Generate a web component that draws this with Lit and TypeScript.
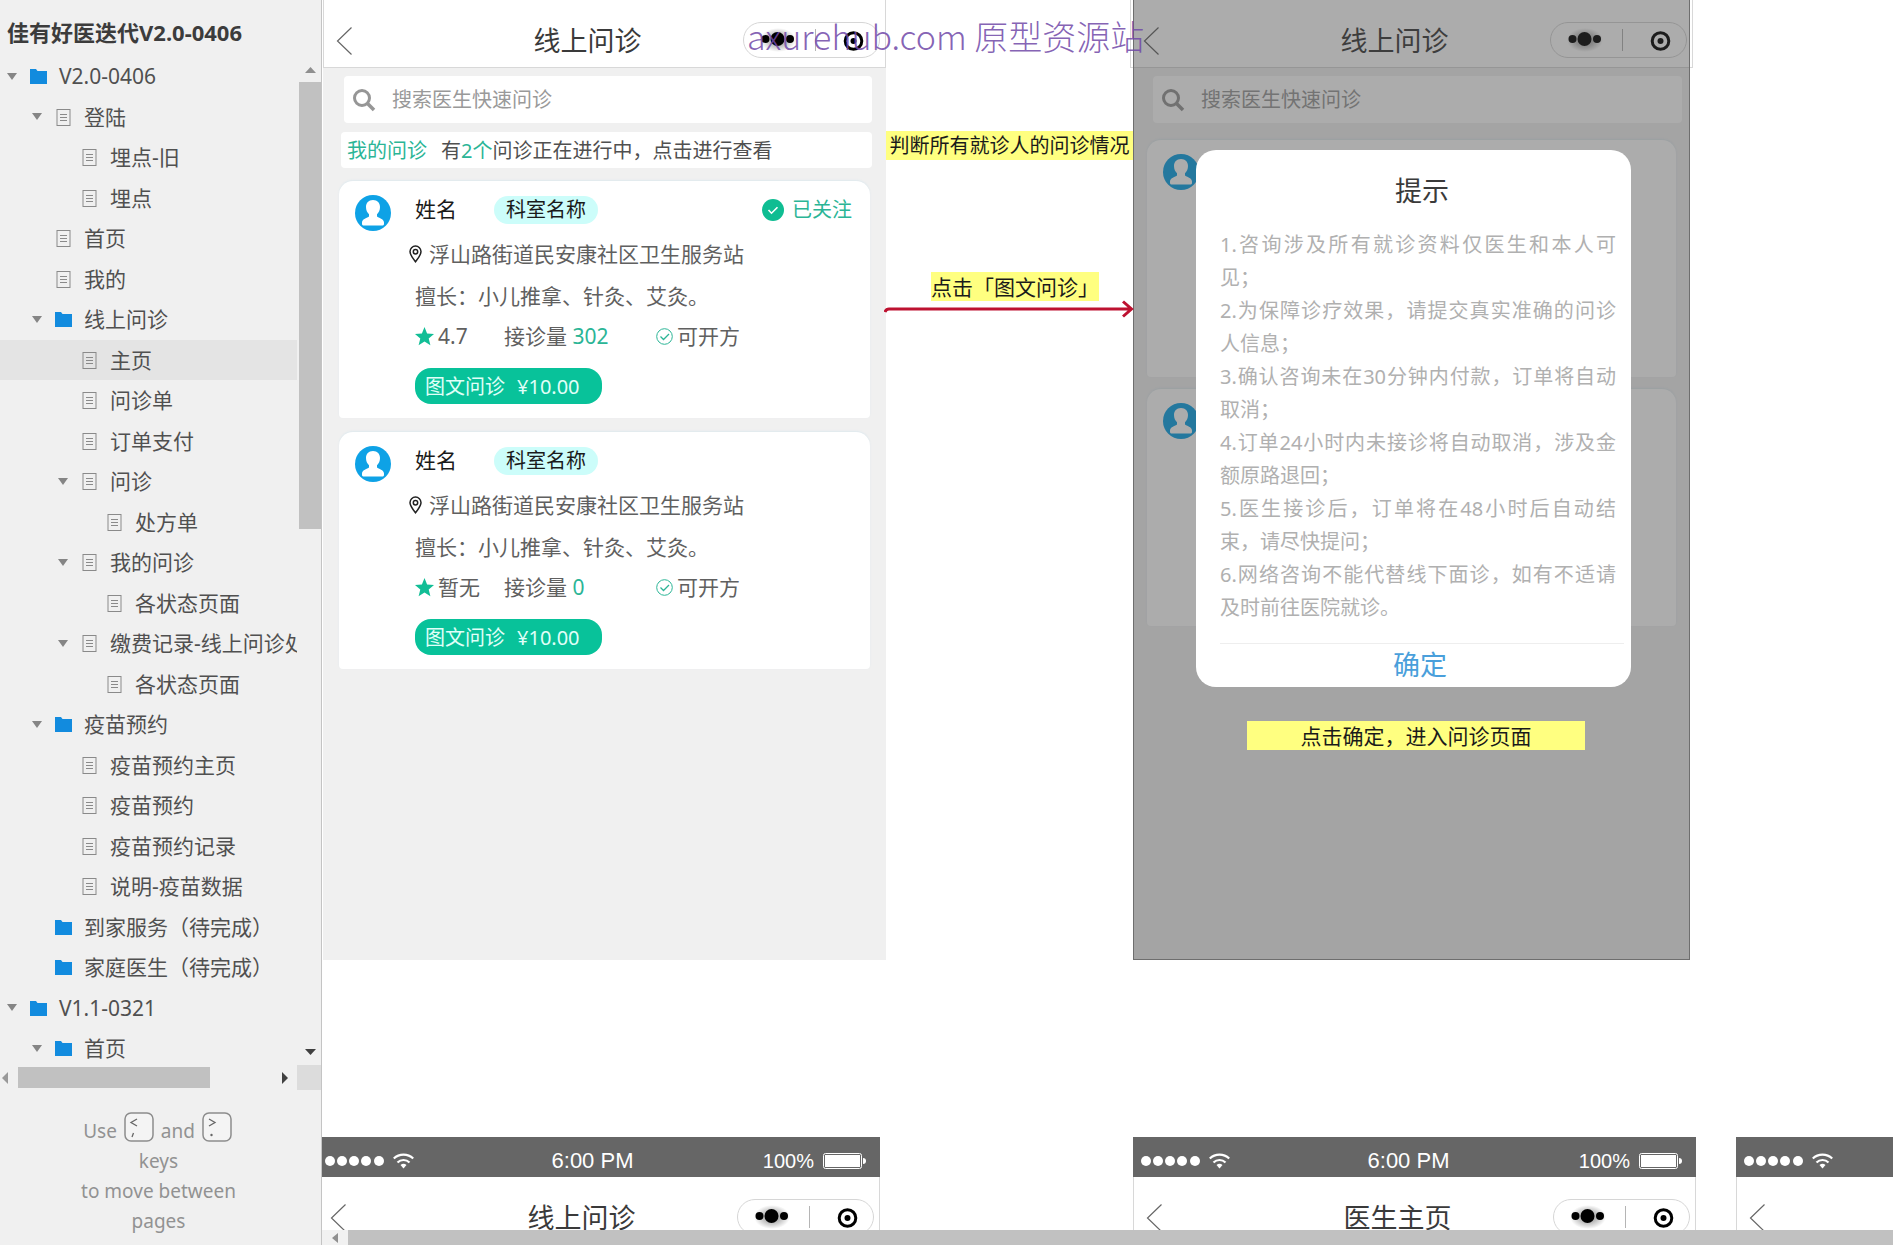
import { LitElement, html, css, svg, nothing } from "lit";
import { customElement, property } from "lit/decorators.js";

const baseStyles = css`
  :host {
    display: block;
    box-sizing: border-box;
  }
  *,
  *::before,
  *::after {
    box-sizing: border-box;
  }
  button {
    appearance: none;
    border: 0;
    padding: 0;
    margin: 0;
    background: none;
    font: inherit;
    color: inherit;
    cursor: pointer;
  }
  svg {
    display: block;
    flex: none;
  }
`;

/* ---------- page tree ---------- */

type TreeNode = {
  level: number;
  kind: "folder" | "page";
  label: string;
  open?: boolean;
  selected?: boolean;
};

const TREE: TreeNode[] = [
  { level: 0, kind: "folder", label: "V2.0-0406", open: true },
  { level: 1, kind: "page", label: "登陆", open: true },
  { level: 2, kind: "page", label: "埋点-旧" },
  { level: 2, kind: "page", label: "埋点" },
  { level: 1, kind: "page", label: "首页" },
  { level: 1, kind: "page", label: "我的" },
  { level: 1, kind: "folder", label: "线上问诊", open: true },
  { level: 2, kind: "page", label: "主页", selected: true },
  { level: 2, kind: "page", label: "问诊单" },
  { level: 2, kind: "page", label: "订单支付" },
  { level: 2, kind: "page", label: "问诊", open: true },
  { level: 3, kind: "page", label: "处方单" },
  { level: 2, kind: "page", label: "我的问诊", open: true },
  { level: 3, kind: "page", label: "各状态页面" },
  { level: 2, kind: "page", label: "缴费记录-线上问诊处方", open: true },
  { level: 3, kind: "page", label: "各状态页面" },
  { level: 1, kind: "folder", label: "疫苗预约", open: true },
  { level: 2, kind: "page", label: "疫苗预约主页" },
  { level: 2, kind: "page", label: "疫苗预约" },
  { level: 2, kind: "page", label: "疫苗预约记录" },
  { level: 2, kind: "page", label: "说明-疫苗数据" },
  { level: 1, kind: "folder", label: "到家服务（待完成）" },
  { level: 1, kind: "folder", label: "家庭医生（待完成）" },
  { level: 0, kind: "folder", label: "V1.1-0321", open: true },
  { level: 1, kind: "folder", label: "首页", open: true },
];

const folderIcon = svg`<svg width="17" height="15" viewBox="0 0 17 15"><path d="M0 0h6l1.500 2H17v13H0z" fill="#128bde"/></svg>`;
const pageIcon = svg`<svg width="17" height="17" viewBox="0 0 17 17"><rect x="2" y="0.500" width="13" height="16" fill="none" stroke="#8a8a8a"/><path d="M5 5.500h7M5 8.500h7M5 11.500h7" stroke="#8a8a8a" fill="none"/></svg>`;

@customElement("site-map")
class SiteMap extends LitElement {
  static styles = [
    baseStyles,
    css`
      :host {
        display: flex;
        flex-direction: column;
        min-height: 0;
        background: #f0f0f0;
        border-right: 1px solid #c4c4c4;
        color: #505050;
        font-size: 21px;
      }
      .title {
        margin: 0;
        padding: 12px 7px 4px;
        font-size: 22px;
        line-height: 40px;
        font-weight: 700;
        color: #3c3c3c;
      }
      .body {
        flex: 1;
        min-height: 0;
        display: grid;
        grid-template-columns: 1fr 24px;
        grid-template-rows: minmax(0, 1fr);
      }
      .list {
        margin: 0;
        padding: 0;
        list-style: none;
        min-width: 0;
        min-height: 0;
        overflow: hidden;
      }
      .row {
        display: flex;
        align-items: center;
        height: 41px;
        color: inherit;
        text-decoration: none;
        white-space: nowrap;
        overflow: hidden;
      }
      .item:nth-child(even) .row {
        height: 40px;
      }
      .selected {
        background: #e4e4e4;
      }
      .l0 {
        padding-left: 7px;
      }
      .l1 {
        padding-left: 32px;
      }
      .l2 {
        padding-left: 58px;
      }
      .l3 {
        padding-left: 83px;
      }
      .arrow {
        flex: none;
        width: 23px;
      }
      .label {
        padding-left: 12px;
      }
      .vbar {
        display: flex;
        flex-direction: column;
        align-items: center;
        padding: 11px 0 10px 2px;
      }
      .vthumb {
        align-self: stretch;
        height: 447px;
        margin-top: 9px;
        background: #c1c1c1;
      }
      .spacer {
        flex: 1;
      }
      .hbar {
        display: flex;
        align-items: center;
        height: 25px;
        padding-left: 2px;
      }
      .hthumb {
        width: 192px;
        height: 21px;
        margin-left: 10px;
        background: #c1c1c1;
      }
      .corner {
        width: 24px;
        height: 25px;
        margin-left: 9px;
        background: #dcdcdc;
      }
      .hint {
        margin: 0;
        padding: 22px 77px 9px 73px;
        text-align: center;
        font-size: 19px;
        line-height: 30px;
        color: #929292;
      }
      .key {
        display: inline-block;
        width: 30px;
        height: 30px;
        margin: 0 2px;
        vertical-align: -4px;
      }
    `,
  ];

  render() {
    return html`
      <h1 class="title">佳有好医迭代V2.0-0406</h1>
      <div class="body">
        <ul class="list">
          ${TREE.map(
            (n) => html`<li class="item">
              <a class="row l${n.level} ${n.selected ? "selected" : ""}" href="#">
                <span class="arrow"
                  >${n.open
                    ? svg`<svg width="10" height="8" viewBox="0 0 10 8"><path d="M0 0h10L5 7z" fill="#858585"/></svg>`
                    : nothing}</span
                >
                ${n.kind === "folder" ? folderIcon : pageIcon}
                <span class="label">${n.label}</span>
              </a>
            </li>`
          )}
        </ul>
        <div class="vbar">
          <svg width="11" height="6" viewBox="0 0 11 6"><path d="M0 6h11L5.500 0z" fill="#8f8f8f" /></svg>
          <div class="vthumb"></div>
          <div class="spacer"></div>
          <svg width="11" height="6" viewBox="0 0 11 6"><path d="M0 0h11L5.500 6z" fill="#404040" /></svg>
        </div>
      </div>
      <div class="hbar">
        <svg width="6" height="12" viewBox="0 0 6 12"><path d="M6 0v12L0 6z" fill="#999" /></svg>
        <div class="hthumb"></div>
        <div class="spacer"></div>
        <svg width="6" height="12" viewBox="0 0 6 12"><path d="M0 0v12l6-6z" fill="#404040" /></svg>
        <div class="corner"></div>
      </div>
      <p class="hint">
        Use
        <svg class="key" viewBox="0 0 30 30">
          <rect x="1" y="1" width="28" height="28" rx="6" fill="#f4f4f4" stroke="#8c8c8c" stroke-width="1.500" />
          <path d="M13 7l-6 3.500 6 3.500M9.500 21l-1.500 4" fill="none" stroke="#666" stroke-width="1.300" />
        </svg>
        and
        <svg class="key" viewBox="0 0 30 30">
          <rect x="1" y="1" width="28" height="28" rx="6" fill="#f4f4f4" stroke="#8c8c8c" stroke-width="1.500" />
          <path d="M7 7l6 3.500-6 3.500" fill="none" stroke="#666" stroke-width="1.300" />
          <circle cx="9.500" cy="23" r="1.200" fill="#666" />
        </svg>
        keys<br />to move between<br />pages
      </p>
    `;
  }
}

/* ---------- phone chrome ---------- */

@customElement("status-bar")
class StatusBar extends LitElement {
  static styles = [
    baseStyles,
    css`
      :host {
        display: grid;
        grid-template-columns: 1fr auto 1fr;
        align-items: center;
        height: 40px;
        padding: 8px 14px 0 8px;
        background: #666;
        color: #fff;
        font-family: "Liberation Sans", Arial, sans-serif;
        line-height: 32px;
      }
      .time {
        font-size: 22px;
        padding-right: 6px;
      }
      .power {
        display: flex;
        align-items: center;
        justify-content: flex-end;
        gap: 9px;
        font-size: 20px;
      }
    `,
  ];

  render() {
    return html`
      <svg width="92" height="16" viewBox="0 0 92 16" fill="#fff">
        ${[5, 17, 29, 41, 54].map((x) => svg`<circle cx=${x} cy="8" r="5"/>`)}
        <path d="M75.500 12l3 3.500 3-3.500a4.500 4.500 0 0 0-6 0z" />
        <path d="M68.800 5.500a14 14 0 0 1 19.400 0M72.500 9.500a8.500 8.500 0 0 1 12 0" fill="none" stroke="#fff" stroke-width="2.200" />
      </svg>
      <span class="time">6:00 PM</span>
      <span class="power">
        100%
        <svg width="43" height="16" viewBox="0 0 43 16">
          <rect x="0.500" y="0.500" width="38" height="15" rx="2" fill="none" stroke="#fff" />
          <rect x="2" y="2" width="35" height="12" fill="#fff" />
          <path d="M40 5a3 3 0 0 1 0 6z" fill="#fff" />
        </svg>
      </span>
    `;
  }
}

@customElement("nav-header")
class NavHeader extends LitElement {
  @property() heading = "";

  static styles = [
    baseStyles,
    css`
      :host {
        display: grid;
        grid-template-columns: 108px 1fr 137px;
        align-items: center;
        height: 68px;
        padding: 14px 5px 0 0;
        background: #fff;
        border: 1px solid #d8d8d8;
        border-top: 0;
      }
      .back {
        justify-self: start;
        padding-left: 12px;
      }
      .heading {
        margin: 0;
        text-align: center;
        font-size: 27px;
        line-height: 36px;
        font-weight: inherit;
        color: #3a3a3a;
      }
      .capsule {
        padding-bottom: 2px;
      }
    `,
  ];

  render() {
    return html`
      <button class="back" aria-label="返回">
        <svg width="16" height="28" viewBox="0 0 16 28">
          <path d="M15.500 0.500L1.500 14l14 13.500" fill="none" stroke="#666" stroke-width="1.200" />
        </svg>
      </button>
      <h2 class="heading">${this.heading}</h2>
      <button class="capsule" aria-label="菜单">
        <svg width="137" height="36" viewBox="0 0 137 36">
          <defs>
            <radialGradient id="halo">
              <stop offset="0.400" stop-color="#000" stop-opacity="0.300" />
              <stop offset="1" stop-color="#000" stop-opacity="0" />
            </radialGradient>
          </defs>
          <rect x="0.500" y="0.500" width="136" height="35" rx="17.500" fill="none" stroke="#d6d6d6" />
          <ellipse cx="35" cy="18" rx="18" ry="12" fill="url(#halo)" />
          <circle cx="22.500" cy="17" r="4" />
          <circle cx="34.500" cy="17" r="7" />
          <circle cx="47" cy="17" r="4" />
          <path d="M72.500 7v22" stroke="#b5b5b5" />
          <circle cx="110.500" cy="19" r="8.300" fill="none" stroke="#000" stroke-width="3" />
          <circle cx="110.500" cy="19" r="3" />
        </svg>
      </button>
    `;
  }
}

/* ---------- home screen parts ---------- */

@customElement("search-box")
class SearchBox extends LitElement {
  static styles = [
    baseStyles,
    css`
      .box {
        display: flex;
        align-items: center;
        gap: 16px;
        height: 47px;
        padding: 0 8px;
        background: #fff;
        border-radius: 4px;
      }
      .field {
        flex: 1;
        min-width: 0;
        border: 0;
        padding: 0;
        outline: 0;
        background: none;
        font: inherit;
        font-size: 20px;
        color: #333;
      }
      .field::placeholder {
        color: #999;
        opacity: 1;
      }
    `,
  ];

  render() {
    return html`<label class="box">
      <svg width="24" height="24" viewBox="0 0 24 24" fill="none" stroke="#969696">
        <circle cx="10" cy="10" r="7.500" stroke-width="3" />
        <path d="M15.500 15.500l6.500 6.500" stroke-width="3.600" />
      </svg>
      <input class="field" type="text" placeholder="搜索医生快速问诊" aria-label="搜索医生快速问诊" />
    </label>`;
  }
}

const avatarIcon = svg`<svg width="36" height="36" viewBox="0 0 36 36">
  <circle cx="18" cy="18" r="18" fill="#0ea2e6" />
  <path
    d="M18 5c4.500 0 7 3 7 7 0 3-1.200 5.600-3 7.300v2.200c1.500 1.500 7 2.200 7 6v1.500c0 1-1 1.500-2 1.500H9c-1 0-2-.5-2-1.500v-1.500c0-3.800 5.500-4.500 7-6v-2.200c-1.800-1.700-3-4.300-3-7.300 0-4 2.500-7 7-7z"
    fill="#fff"
  />
</svg>`;

@customElement("doctor-card")
class DoctorCard extends LitElement {
  @property() score = "";
  @property() visits = "";
  @property({ type: Boolean }) followed = false;
  @property({ type: Boolean }) placeholder = false;

  static styles = [
    baseStyles,
    css`
      .card {
        display: grid;
        grid-template-columns: 54px 1fr;
        min-height: 237px;
        padding: 14px 18px 13px 16px;
        background: #fff;
        border-radius: 14px 14px 4px 4px;
        box-shadow: 0 -1px 2px #dfe9ee;
        font-size: 21px;
        color: #606060;
      }
      .head,
      .skill,
      .place {
        display: flex;
        align-items: center;
        white-space: nowrap;
      }
      .head {
        height: 29px;
        padding-left: 6px;
        color: #1a1a1a;
      }
      .name {
        width: 79px;
      }
      .tag {
        padding: 0 12px;
        border-radius: 14px;
        background: #ccfdfa;
        font-size: 20px;
        line-height: 28px;
      }
      .follow {
        display: flex;
        align-items: center;
        gap: 8px;
        margin-left: auto;
        font-size: 20px;
        color: #2bb596;
      }
      .place {
        height: 42px;
        margin-top: 9px;
        gap: 7px;
      }
      .skill {
        height: 42px;
        padding-left: 6px;
      }
      .stats {
        display: grid;
        grid-template-columns: 89px 152px auto;
        align-items: center;
        height: 39px;
        padding-left: 6px;
        white-space: nowrap;
      }
      .stat {
        display: flex;
        align-items: center;
        gap: 4px;
      }
      .count {
        color: #2bb596;
      }
      .consult {
        display: flex;
        align-items: center;
        gap: 12px;
        height: 36px;
        margin: 12px 0 0 6px;
        padding: 0 22px 0 10px;
        border-radius: 16px;
        background: #08c29a;
        color: #e0fff8;
        font-size: 20px;
      }
    `,
  ];

  render() {
    if (this.placeholder) {
      return html`<article class="card">${avatarIcon}</article>`;
    }
    return html`<article class="card">
      ${avatarIcon}
      <div>
        <div class="head">
          <span class="name">姓名</span>
          <span class="tag">科室名称</span>
          ${this.followed
            ? html`<button class="follow">
                <svg width="22" height="22" viewBox="0 0 22 22">
                  <circle cx="11" cy="11" r="11" fill="#0fbd92" />
                  <path d="M6.500 11l3 3.200 6-6" fill="none" stroke="#fff" stroke-width="1.600" />
                </svg>
                已关注
              </button>`
            : nothing}
        </div>
        <div class="place">
          <svg width="13" height="18" viewBox="0 0 13 18" fill="none" stroke="#222" stroke-width="1.500">
            <path d="M6.500 16.800C3.500 13 1 10 1 6.600a5.500 5.500 0 0 1 11 0c0 3.400-2.500 6.400-5.500 10.200z" />
            <circle cx="6.500" cy="6.700" r="2.200" />
          </svg>
          浮山路街道民安康社区卫生服务站
        </div>
        <div class="skill">擅长：小儿推拿、针灸、艾灸。</div>
        <div class="stats">
          <span class="stat">
            <svg width="19" height="19" viewBox="0 0 19 19">
              <path d="M9.500 0l2.600 6.400 6.900.5-5.300 4.500 1.700 6.900-5.900-3.800-5.900 3.800 1.700-6.900L0 6.900l6.900-.5z" fill="#12be96" />
            </svg>
            ${this.score}
          </span>
          <span>接诊量 <span class="count">${this.visits}</span></span>
          <span class="stat">
            <svg width="17" height="17" viewBox="0 0 17 17" fill="none" stroke="#2bb596">
              <circle cx="8.500" cy="8.500" r="7.800" />
              <path d="M4.500 8.500l3 3 5.500-5.500" stroke-width="1.300" />
            </svg>
            可开方
          </span>
        </div>
        <button class="consult"><span>图文问诊</span><span>¥10.00</span></button>
      </div>
    </article>`;
  }
}

/* ---------- dialog ---------- */

const TERMS = [
  "1.咨询涉及所有就诊资料仅医生和本人可见；",
  "2.为保障诊疗效果，请提交真实准确的问诊人信息；",
  "3.确认咨询未在30分钟内付款，订单将自动取消；",
  "4.订单24小时内未接诊将自动取消，涉及金额原路退回；",
  "5.医生接诊后，订单将在48小时后自动结束，请尽快提问；",
  "6.网络咨询不能代替线下面诊，如有不适请及时前往医院就诊。",
];

@customElement("notice-dialog")
class NoticeDialog extends LitElement {
  static styles = [
    baseStyles,
    css`
      .dialog {
        padding: 21px 7px 2px 24px;
        background: #fff;
        border-radius: 20px;
      }
      .title {
        margin: 0 0 17px;
        text-align: center;
        font-size: 27px;
        line-height: 40px;
        font-weight: inherit;
        color: #3a3a3a;
      }
      .terms {
        padding: 0 8px 19px 0;
        border-bottom: 1px solid #eee;
        font-size: 20px;
        line-height: 33px;
        color: #b0b0b0;
      }
      .term {
        margin: 0;
        text-align: justify;
      }
      .ok {
        display: block;
        width: 100%;
        padding-right: 4px;
        font-size: 27px;
        line-height: 41px;
        color: #4a9fdb;
      }
    `,
  ];

  render() {
    return html`<section class="dialog" role="dialog" aria-label="提示">
      <h2 class="title">提示</h2>
      <div class="terms">${TERMS.map((t) => html`<p class="term">${t}</p>`)}</div>
      <button class="ok">确定</button>
    </section>`;
  }
}

/* ---------- page ---------- */

@customElement("app-root")
class AppRoot extends LitElement {
  static styles = [
    baseStyles,
    css`
      :host {
        display: grid;
        grid-template-columns: 322px 1fr;
        grid-template-rows: minmax(0, 1fr);
        height: 100vh;
        overflow: hidden;
        background: #fff;
        font-family: "Noto Sans", "Noto Sans CJK SC", sans-serif;
        font-weight: 400;
        line-height: 1.35;
      }
      .stage {
        display: flex;
        flex-direction: column;
        min-width: 0;
        min-height: 0;
      }
      /* free canvas: screens and notes are pinned at their own coordinates */
      .canvas {
        position: relative;
        flex: 1;
        overflow: hidden;
      }
      .pin {
        position: absolute;
      }
      .screen {
        top: 0;
        width: 563px;
        height: 960px;
        background: #f0f0f0;
      }
      .list {
        display: flex;
        flex-direction: column;
        gap: 14px;
        padding: 13px 16px 0;
      }
      .search {
        margin: 8px 14px 0 21px;
      }
      .mine {
        display: flex;
        align-items: center;
        gap: 14px;
        height: 36px;
        margin: 9px 14px 0 18px;
        padding: 0 6px;
        background: #fff;
        border-radius: 4px;
        font-size: 20px;
        color: #505050;
        white-space: nowrap;
      }
      .link {
        color: #2bb596;
        text-decoration: none;
      }
      .home {
        left: 1px;
      }
      .behind {
        left: 811px;
        width: 557px;
      }
      .behind nav-header {
        margin: 0 -3px;
      }
      .behind .search {
        margin: 8px 8px 0 20px;
      }
      .behind .list {
        gap: 12px;
        padding: 17px 14px 0;
      }
      .mask {
        left: 811px;
        top: 0;
        width: 557px;
        height: 960px;
        background: rgba(65, 65, 65, 0.44);
        border: 1px solid #6e6e6e;
        border-top: 0;
      }
      .dialog {
        left: 874px;
        top: 150px;
        width: 435px;
      }
      .note {
        padding-top: 1px;
        background: #ffff80;
        color: #1a1a1a;
        white-space: nowrap;
        text-align: center;
        line-height: 28px;
      }
      .note-all {
        left: 564px;
        top: 131px;
        width: 247px;
        font-size: 20px;
      }
      .note-tap {
        left: 609px;
        top: 272px;
        font-size: 21px;
      }
      .note-ok {
        left: 925px;
        top: 721px;
        width: 338px;
        font-size: 21px;
      }
      .flow {
        left: 562px;
        top: 300px;
      }
      .lower {
        top: 1137px;
        width: 563px;
      }
      .lower-a {
        left: -5px;
      }
      .lower-b {
        left: 811px;
      }
      .lower-c {
        left: 1414px;
      }
      .watermark {
        left: 425px;
        top: 13px;
        font-family: "Noto Sans CJK SC", sans-serif;
        font-size: 34px;
        font-weight: 300;
        line-height: 46px;
        white-space: nowrap;
        color: rgba(112, 72, 168, 0.85);
      }
      .hbar {
        display: flex;
        align-items: center;
        height: 15px;
        padding-left: 10px;
        gap: 10px;
        background: #f1f1f1;
      }
      .thumb {
        flex: 1;
        align-self: stretch;
        background: #c1c1c1;
      }
    `,
  ];

  render() {
    return html`
      <site-map></site-map>
      <main class="stage">
        <div class="canvas">
          <section class="pin screen home">
            <nav-header heading="线上问诊"></nav-header>
            <search-box class="search"></search-box>
            <div class="mine">
              <a class="link" href="#">我的问诊</a>
              <span>有<a class="link" href="#">2个</a>问诊正在进行中，点击进行查看</span>
            </div>
            <div class="list">
              <doctor-card score="4.7" visits="302" followed></doctor-card>
              <doctor-card score="暂无" visits="0"></doctor-card>
            </div>
          </section>

          <section class="pin screen behind">
            <nav-header heading="线上问诊"></nav-header>
            <search-box class="search"></search-box>
            <div class="list">
              <doctor-card placeholder></doctor-card>
              <doctor-card placeholder></doctor-card>
            </div>
          </section>
          <div class="pin mask"></div>
          <notice-dialog class="pin dialog"></notice-dialog>

          <div class="pin note note-all">判断所有就诊人的问诊情况</div>
          <div class="pin note note-tap">点击「图文问诊」</div>
          <div class="pin note note-ok">点击确定，进入问诊页面</div>
          <svg class="pin flow" width="250" height="18" viewBox="0 0 250 18" fill="none" stroke="#bd1130" stroke-width="3">
            <path d="M1 12q1-3 4-3h242M239 1.500l8.500 7.500-8.500 7.500" />
          </svg>

          <section class="pin lower lower-a">
            <status-bar></status-bar>
            <nav-header heading="线上问诊"></nav-header>
          </section>
          <section class="pin lower lower-b">
            <status-bar></status-bar>
            <nav-header heading="医生主页"></nav-header>
          </section>
          <section class="pin lower lower-c">
            <status-bar></status-bar>
            <nav-header heading=""></nav-header>
          </section>

          <div class="pin watermark">axurehub.com 原型资源站</div>
        </div>
        <div class="hbar">
          <svg width="6" height="10" viewBox="0 0 6 10"><path d="M6 0v10L0 5z" fill="#8f8f8f" /></svg>
          <div class="thumb"></div>
        </div>
      </main>
    `;
  }
}
